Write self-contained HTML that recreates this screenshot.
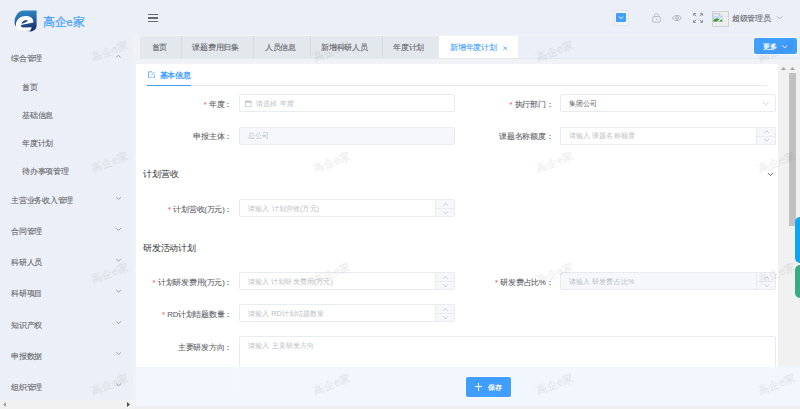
<!DOCTYPE html>
<html><head><meta charset="utf-8">
<style>
*{box-sizing:border-box;margin:0;padding:0}
html,body{width:800px;height:409px;overflow:hidden}
body{position:relative;background:#ebeff7;font-family:"Liberation Sans",sans-serif;color:#606266}
.a{position:absolute}
.t{position:absolute;white-space:nowrap;line-height:10px}
.star{color:#f56c6c;margin-right:2.5px}
.inp{position:absolute;height:17.5px;border:0.8px solid #e8ebf0;border-radius:2px;background:#fff}
.dis{background:#f5f7fa}
.ctl{position:absolute;right:0;top:0;width:18.6px;height:100%;border-left:0.8px solid #e8ebf0;background:#f5f7fa;border-radius:0 2px 2px 0}
.ctl:after{content:"";position:absolute;left:0;right:0;top:50%;border-top:0.8px solid #e8ebf0}
.wm{position:absolute;font-size:11.4px;color:rgba(0,0,0,0.06);-webkit-text-stroke:0.35px rgba(0,0,0,0.06);filter:blur(0.25px);transform:rotate(-21deg);white-space:nowrap;line-height:12px}
</style></head><body>

<div class="a" style="left:133px;top:35px;width:667px;height:374px;background:#f0f2f5"></div>
<div class="a" style="left:518.3px;top:36px;width:282px;height:21.8px;background:#ebeff7"></div>
<svg class="a" style="left:12px;top:8px" width="28" height="26" viewBox="0 0 28 26">
 <defs><linearGradient id="lg" x1="0" y1="0" x2="0.15" y2="1"><stop offset="0" stop-color="#2e8dc8"/><stop offset="0.5" stop-color="#2566a6"/><stop offset="1" stop-color="#1a2c6b"/></linearGradient></defs>
 <path d="M24.6 2.5 L24.6 17.8 C24.6 20.8 22.2 23.2 18.6 23.4 L11.5 22.2 C6 21.5 2.6 18.8 2.6 14.6 C2.6 7.6 6.6 2.5 11.2 2.5 Z" fill="url(#lg)"/>
 <path d="M21.3 14.6 C21.7 10.6 18.6 8.1 13.6 8.1 C7.8 8.1 3.9 12.2 3.9 17 C3.9 20.7 6.8 22.9 11.5 22.9 L18.2 22.7 L19.8 19.2 L11.6 19.4 C9.6 19.4 8.7 18.3 8.9 16.9 Z" fill="#fff"/>
 <path d="M9.3 15.7 C10.1 13.1 12.6 11.6 15.8 12 C15 14.1 12.6 15.5 9.3 15.7 Z" fill="#21508f"/>
</svg>
<div class="t" style="left:42.8px;top:15.2px;font-size:12.4px;line-height:14px;color:#409eff;letter-spacing:-0.1px;-webkit-text-stroke:0.2px #409eff">高企<span style="font-size:11px">e</span>家</div>
<div class="t" style="left:11px;top:53.55px;font-size:7.7px;letter-spacing:-0.25px;-webkit-text-stroke:0.08px currentColor;color:#606266;">综合管理</div>
<svg class="a" style="left:115px;top:54px" width="7" height="5" viewBox="0 0 7 5"><path d="M1.10 3.55 L3.40 1.25 L5.70 3.55" fill="none" stroke="#8c8f95" stroke-width="0.85"/></svg>
<div class="t" style="left:22.2px;top:83.40px;font-size:7.7px;letter-spacing:-0.25px;-webkit-text-stroke:0.08px currentColor;color:#606266;">首页</div>
<div class="t" style="left:22.2px;top:111.40px;font-size:7.7px;letter-spacing:-0.25px;-webkit-text-stroke:0.08px currentColor;color:#606266;">基础信息</div>
<div class="t" style="left:22.2px;top:139.00px;font-size:7.7px;letter-spacing:-0.25px;-webkit-text-stroke:0.08px currentColor;color:#606266;">年度计划</div>
<div class="t" style="left:22.2px;top:166.90px;font-size:7.7px;letter-spacing:-0.25px;-webkit-text-stroke:0.08px currentColor;color:#606266;">待办事项管理</div>
<div class="t" style="left:11px;top:196.20px;font-size:7.7px;letter-spacing:-0.25px;-webkit-text-stroke:0.08px currentColor;color:#606266;">主营业务收入管理</div>
<svg class="a" style="left:115px;top:196px" width="7" height="5" viewBox="0 0 7 5"><path d="M1.20 1.10 L3.50 3.40 L5.80 1.10" fill="none" stroke="#8c8f95" stroke-width="0.85"/></svg>
<div class="t" style="left:11px;top:227.25px;font-size:7.7px;letter-spacing:-0.25px;-webkit-text-stroke:0.08px currentColor;color:#606266;">合同管理</div>
<svg class="a" style="left:115px;top:227px" width="7" height="5" viewBox="0 0 7 5"><path d="M1.20 1.15 L3.50 3.45 L5.80 1.15" fill="none" stroke="#8c8f95" stroke-width="0.85"/></svg>
<div class="t" style="left:11px;top:258.00px;font-size:7.7px;letter-spacing:-0.25px;-webkit-text-stroke:0.08px currentColor;color:#606266;">科研人员</div>
<svg class="a" style="left:115px;top:257px" width="7" height="5" viewBox="0 0 7 5"><path d="M1.20 1.90 L3.50 4.20 L5.80 1.90" fill="none" stroke="#8c8f95" stroke-width="0.85"/></svg>
<div class="t" style="left:11px;top:289.00px;font-size:7.7px;letter-spacing:-0.25px;-webkit-text-stroke:0.08px currentColor;color:#606266;">科研项目</div>
<svg class="a" style="left:115px;top:288px" width="7" height="5" viewBox="0 0 7 5"><path d="M1.20 1.90 L3.50 4.20 L5.80 1.90" fill="none" stroke="#8c8f95" stroke-width="0.85"/></svg>
<div class="t" style="left:11px;top:320.50px;font-size:7.7px;letter-spacing:-0.25px;-webkit-text-stroke:0.08px currentColor;color:#606266;">知识产权</div>
<svg class="a" style="left:115px;top:320px" width="7" height="5" viewBox="0 0 7 5"><path d="M1.20 1.40 L3.50 3.70 L5.80 1.40" fill="none" stroke="#8c8f95" stroke-width="0.85"/></svg>
<div class="t" style="left:11px;top:351.50px;font-size:7.7px;letter-spacing:-0.25px;-webkit-text-stroke:0.08px currentColor;color:#606266;">申报数据</div>
<svg class="a" style="left:115px;top:351px" width="7" height="5" viewBox="0 0 7 5"><path d="M1.20 1.40 L3.50 3.70 L5.80 1.40" fill="none" stroke="#8c8f95" stroke-width="0.85"/></svg>
<div class="t" style="left:11px;top:382.70px;font-size:7.7px;letter-spacing:-0.25px;-webkit-text-stroke:0.08px currentColor;color:#606266;">组织管理</div>
<svg class="a" style="left:115px;top:382px" width="7" height="5" viewBox="0 0 7 5"><path d="M1.20 1.60 L3.50 3.90 L5.80 1.60" fill="none" stroke="#8c8f95" stroke-width="0.85"/></svg>
<div class="a" style="left:147.8px;top:14.1px;width:10.2px;height:1.2px;background:#66686d"></div>
<div class="a" style="left:147.8px;top:17.4px;width:10.2px;height:1.2px;background:#66686d"></div>
<div class="a" style="left:147.8px;top:20.5px;width:10.2px;height:1.2px;background:#66686d"></div>
<div class="a" style="left:613.7px;top:10px;width:15px;height:15.6px;border:0.8px solid #e3e6ec;border-radius:2px;background:#f2f4f8"></div>
<div class="a" style="left:616.2px;top:12.7px;width:9.8px;height:9.8px;background:#409eff;border-radius:1px"></div>
<svg class="a" style="left:617px;top:15px" width="7" height="5" viewBox="0 0 7 5"><path d="M1.90 1.50 L4.10 3.70 L6.30 1.50" fill="none" stroke="#fff" stroke-width="1.0"/></svg>
<svg class="a" style="left:652px;top:13px" width="9" height="10" viewBox="0 0 9 10"><path d="M2.5 3.6 V2.6 C2.5 1.4 3.4 0.6 4.5 0.6 C5.6 0.6 6.5 1.4 6.5 2.6 V3.6" fill="none" stroke="#b3b6bc" stroke-width="0.85"/><rect x="0.7" y="3.6" width="7.6" height="5.6" rx="0.8" fill="none" stroke="#b3b6bc" stroke-width="0.85"/><circle cx="4.5" cy="6.3" r="0.5" fill="#a0a3a9"/></svg>
<svg class="a" style="left:672px;top:15.2px" width="10" height="6" viewBox="0 0 10 6"><path d="M0.5 3 C1.8 1.2 3.2 0.5 5 0.5 C6.8 0.5 8.2 1.2 9.5 3 C8.2 4.8 6.8 5.5 5 5.5 C3.2 5.5 1.8 4.8 0.5 3 Z" fill="none" stroke="#a3a6ac" stroke-width="0.85"/><circle cx="5" cy="3" r="1.35" fill="none" stroke="#a3a6ac" stroke-width="0.8"/></svg>
<svg class="a" style="left:692.5px;top:13px" width="10" height="10" viewBox="0 0 10 10" fill="none" stroke="#7c7f85" stroke-width="0.85"><path d="M0.6 2.8 V0.6 H2.8 M0.7 0.7 L3.2 3.2"/><path d="M9.4 2.8 V0.6 H7.2 M9.3 0.7 L6.8 3.2"/><path d="M0.6 7.2 V9.4 H2.8 M0.7 9.3 L3.2 6.8"/><path d="M9.4 7.2 V9.4 H7.2 M9.3 9.3 L6.8 6.8"/></svg>
<div class="a" style="left:712.3px;top:11.2px;width:16.4px;height:16.2px;border:0.7px solid #d2d2d2;background:#eeeeef"></div>
<svg class="a" style="left:713.3px;top:12.5px" width="10" height="9" viewBox="0 0 10 9"><path d="M0.4 0.4 H6.6 L9.2 3 V8.5 H0.4 Z" fill="#c9dcf3" stroke="#a9b3c0" stroke-width="0.45"/><path d="M6.6 0.4 V3 H9.2" fill="#f4f4f4" stroke="#a9b3c0" stroke-width="0.45"/><path d="M1 2.5 C2.5 1.6 4 1.8 5 2.6" stroke="#eef4fb" stroke-width="1.1" fill="none"/><path d="M0.4 8.5 V7.2 C1.8 5.6 3.6 5.1 5.2 5.6 L6.4 6.4 L4.6 8.5 Z" fill="#3e9b2f"/><path d="M6.2 8.5 L8 6.6 L9.2 6.9 V8.5 Z" fill="#3e9b2f"/><path d="M4.2 9 L9.2 4.6" stroke="#ffffff" stroke-width="0.9"/></svg>
<div class="t" style="left:731.8px;top:13.60px;font-size:7.7px;letter-spacing:-0.25px;-webkit-text-stroke:0.08px currentColor;color:#606266;">超级管理员</div>
<svg class="a" style="left:776px;top:15px" width="8" height="5" viewBox="0 0 8 5"><path d="M1.10 1.40 L3.70 4.00 L6.30 1.40" fill="none" stroke="#909399" stroke-width="0.7"/></svg>
<div class="a" style="left:139.8px;top:57.5px;width:660px;height:1px;background:#e5e8ee"></div>
<div class="a" style="left:139.8px;top:35.5px;width:299.2px;height:22.3px;background:#e3e8ed;border-radius:1.5px 0 0 0"></div>
<div class="a" style="left:180.5px;top:35.5px;width:0.8px;height:22.3px;background:#d7dbe2"></div>
<div class="a" style="left:253.0px;top:35.5px;width:0.8px;height:22.3px;background:#d7dbe2"></div>
<div class="a" style="left:309.6px;top:35.5px;width:0.8px;height:22.3px;background:#d7dbe2"></div>
<div class="a" style="left:381.6px;top:35.5px;width:0.8px;height:22.3px;background:#d7dbe2"></div>
<div class="t" style="left:151.5px;top:43.00px;font-size:7.7px;letter-spacing:-0.25px;-webkit-text-stroke:0.08px currentColor;color:#606266;">首页</div>
<div class="t" style="left:192.3px;top:43.00px;font-size:7.7px;letter-spacing:-0.25px;-webkit-text-stroke:0.08px currentColor;color:#606266;">课题费用归集</div>
<div class="t" style="left:264.8px;top:43.00px;font-size:7.7px;letter-spacing:-0.25px;-webkit-text-stroke:0.08px currentColor;color:#606266;">人员信息</div>
<div class="t" style="left:321.0px;top:43.00px;font-size:7.7px;letter-spacing:-0.25px;-webkit-text-stroke:0.08px currentColor;color:#606266;">新增科研人员</div>
<div class="t" style="left:393.0px;top:43.00px;font-size:7.7px;letter-spacing:-0.25px;-webkit-text-stroke:0.08px currentColor;color:#606266;">年度计划</div>
<div class="a" style="left:439px;top:35.8px;width:79.3px;height:21.8px;background:#fff"></div>
<div class="t" style="left:450.0px;top:43.00px;font-size:7.7px;letter-spacing:-0.25px;-webkit-text-stroke:0.08px currentColor;color:#409eff;">新增年度计划</div>
<svg class="a" style="left:502.5px;top:46.3px" width="4.5" height="4.5" viewBox="0 0 4.5 4.5"><path d="M0.4 0.4 L4.1 4.1 M4.1 0.4 L0.4 4.1" stroke="#409eff" stroke-width="0.75"/></svg>
<div class="a" style="left:754.2px;top:38.2px;width:42.8px;height:16.1px;background:#409eff;border-radius:2px;box-shadow:0 0 0 0.9px rgba(255,255,255,0.75)"></div>
<div class="t" style="left:763.0px;top:41.90px;font-size:7.3px;letter-spacing:0.1px;color:#fff;font-weight:bold;-webkit-text-stroke:0;">更多</div>
<svg class="a" style="left:781px;top:44px" width="7" height="5" viewBox="0 0 7 5"><path d="M1.30 1.40 L3.70 3.80 L6.10 1.40" fill="none" stroke="#fff" stroke-width="0.95"/></svg>
<div class="a" style="left:136px;top:63.8px;width:642.3px;height:303.5px;background:#fff"></div>
<svg class="a" style="left:147.5px;top:70.8px" width="7.5" height="7.5" viewBox="0 0 7.5 7.5" fill="none" stroke="#409eff" stroke-width="0.8"><path d="M4 0.8 H0.6 V6.9 H6.7 V3.5"/><path d="M3.2 4.3 L6.8 0.7"/></svg>
<div class="t" style="left:159.7px;top:70.85px;font-size:7.7px;letter-spacing:-0.25px;-webkit-text-stroke:0.08px currentColor;color:#409eff;font-weight:bold;-webkit-text-stroke:0;">基本信息</div>
<div class="a" style="left:147px;top:85px;width:620px;height:0.9px;background:#e4e7ed"></div>
<div class="a" style="left:147px;top:84.6px;width:43.8px;height:1.5px;background:#409eff"></div>
<div class="t" style="right:567.80px;top:99.85px;font-size:7.7px;letter-spacing:-0.25px;-webkit-text-stroke:0.08px currentColor;color:#606266;text-align:right"><span class="star">*</span>年度：</div>
<div class="inp" style="left:238.60px;top:94.20px;width:216.30px;height:18.00px"></div>
<div class="t" style="left:256.3px;top:98.90px;font-size:7.3px;letter-spacing:0.1px;color:#babec6;">请选择 年度</div>
<svg class="a" style="left:245.40px;top:100.30px" width="7" height="7" viewBox="0 0 7 7"><rect x="0.55" y="1.2" width="5.6" height="5.2" fill="none" stroke="#c0c4cc" stroke-width="0.75"/><rect x="0.55" y="1.2" width="5.6" height="1.5" fill="#c0c4cc"/><path d="M2 0.2 V1.6 M4.7 0.2 V1.6" stroke="#c0c4cc" stroke-width="0.7"/></svg>
<div class="t" style="right:246.60px;top:99.85px;font-size:7.7px;letter-spacing:-0.25px;-webkit-text-stroke:0.08px currentColor;color:#606266;text-align:right"><span class="star">*</span>执行部门：</div>
<div class="inp" style="left:559.80px;top:94.20px;width:216.20px;height:18.00px"></div>
<div class="t" style="left:568.8px;top:98.90px;font-size:7.3px;letter-spacing:0.1px;color:#606266;">集团公司</div>
<svg class="a" style="left:762px;top:101px" width="8" height="5" viewBox="0 0 8 5"><path d="M1.10 1.00 L3.90 3.80 L6.70 1.00" fill="none" stroke="#b8bcc4" stroke-width="0.7"/></svg>
<div class="t" style="right:567.80px;top:132.35px;font-size:7.7px;letter-spacing:-0.25px;-webkit-text-stroke:0.08px currentColor;color:#606266;text-align:right">申报主体：</div>
<div class="inp dis" style="left:238.60px;top:126.50px;width:216.30px;height:18.00px"></div>
<div class="t" style="left:247.60000000000002px;top:131.20px;font-size:7.3px;letter-spacing:0.1px;color:#babec6;">总公司</div>
<div class="t" style="right:246.60px;top:132.35px;font-size:7.7px;letter-spacing:-0.25px;-webkit-text-stroke:0.08px currentColor;color:#606266;text-align:right">课题名称额度：</div>
<div class="inp" style="left:559.80px;top:126.50px;width:216.20px;height:18.00px"><div class="ctl"></div></div>
<div class="t" style="left:568.8px;top:131.20px;font-size:7.3px;letter-spacing:0.1px;color:#babec6;">请输入 课题名称额度</div>
<svg class="a" style="left:763px;top:129px" width="7" height="5" viewBox="0 0 7 5"><path d="M1.40 4.15 L3.70 1.85 L6.00 4.15" fill="none" stroke="#b4b7be" stroke-width="0.65"/></svg>
<svg class="a" style="left:763px;top:137px" width="7" height="5" viewBox="0 0 7 5"><path d="M1.40 1.85 L3.70 4.15 L6.00 1.85" fill="none" stroke="#b4b7be" stroke-width="0.65"/></svg>
<div class="t" style="left:143px;top:169.25px;font-size:8.7px;letter-spacing:-0.1px;color:#303133;">计划营收</div>
<svg class="a" style="left:766px;top:172px" width="8" height="5" viewBox="0 0 8 5"><path d="M1.80 1.00 L4.40 3.60 L7.00 1.00" fill="none" stroke="#303133" stroke-width="0.75"/></svg>
<div class="t" style="right:567.80px;top:205.15px;font-size:7.7px;letter-spacing:-0.25px;-webkit-text-stroke:0.08px currentColor;color:#606266;text-align:right"><span class="star">*</span>计划营收(万元)：</div>
<div class="inp" style="left:239.10px;top:199.10px;width:215.80px;height:18.00px"><div class="ctl"></div></div>
<div class="t" style="left:248.10000000000002px;top:203.80px;font-size:7.3px;letter-spacing:0.1px;color:#babec6;">请输入 计划营收(万元)</div>
<svg class="a" style="left:442px;top:202px" width="7" height="5" viewBox="0 0 7 5"><path d="M1.30 3.75 L3.60 1.45 L5.90 3.75" fill="none" stroke="#b4b7be" stroke-width="0.65"/></svg>
<svg class="a" style="left:442px;top:210px" width="7" height="5" viewBox="0 0 7 5"><path d="M1.30 1.45 L3.60 3.75 L5.90 1.45" fill="none" stroke="#b4b7be" stroke-width="0.65"/></svg>
<div class="t" style="left:142.8px;top:242.50px;font-size:8.7px;letter-spacing:-0.1px;color:#303133;">研发活动计划</div>
<div class="t" style="right:567.80px;top:277.65px;font-size:7.7px;letter-spacing:-0.25px;-webkit-text-stroke:0.08px currentColor;color:#606266;text-align:right"><span class="star">*</span>计划研发费用(万元)：</div>
<div class="inp" style="left:238.80px;top:272.20px;width:216.10px;height:18.00px"><div class="ctl"></div></div>
<div class="t" style="left:247.8px;top:276.90px;font-size:7.3px;letter-spacing:0.1px;color:#babec6;">请输入 计划研发费用(万元)</div>
<svg class="a" style="left:442px;top:275px" width="7" height="5" viewBox="0 0 7 5"><path d="M1.30 3.85 L3.60 1.55 L5.90 3.85" fill="none" stroke="#b4b7be" stroke-width="0.65"/></svg>
<svg class="a" style="left:442px;top:283px" width="7" height="5" viewBox="0 0 7 5"><path d="M1.30 1.55 L3.60 3.85 L5.90 1.55" fill="none" stroke="#b4b7be" stroke-width="0.65"/></svg>
<div class="t" style="right:246.60px;top:277.65px;font-size:7.7px;letter-spacing:-0.25px;-webkit-text-stroke:0.08px currentColor;color:#606266;text-align:right"><span class="star">*</span>研发费占比%：</div>
<div class="inp dis" style="left:559.80px;top:272.20px;width:216.20px;height:18.00px"><div class="ctl"></div></div>
<div class="t" style="left:568.8px;top:276.90px;font-size:7.3px;letter-spacing:0.1px;color:#babec6;">请输入 研发费占比%</div>
<svg class="a" style="left:763px;top:275px" width="7" height="5" viewBox="0 0 7 5"><path d="M1.40 3.85 L3.70 1.55 L6.00 3.85" fill="none" stroke="#b4b7be" stroke-width="0.65"/></svg>
<svg class="a" style="left:763px;top:283px" width="7" height="5" viewBox="0 0 7 5"><path d="M1.40 1.55 L3.70 3.85 L6.00 1.55" fill="none" stroke="#b4b7be" stroke-width="0.65"/></svg>
<div class="t" style="right:567.80px;top:309.65px;font-size:7.7px;letter-spacing:-0.25px;-webkit-text-stroke:0.08px currentColor;color:#606266;text-align:right"><span class="star">*</span>RD计划结题数量：</div>
<div class="inp" style="left:238.80px;top:304.20px;width:216.10px;height:18.00px"><div class="ctl"></div></div>
<div class="t" style="left:247.8px;top:308.90px;font-size:7.3px;letter-spacing:0.1px;color:#babec6;">请输入 RD计划结题数量</div>
<svg class="a" style="left:442px;top:307px" width="7" height="5" viewBox="0 0 7 5"><path d="M1.30 3.85 L3.60 1.55 L5.90 3.85" fill="none" stroke="#b4b7be" stroke-width="0.65"/></svg>
<svg class="a" style="left:442px;top:315px" width="7" height="5" viewBox="0 0 7 5"><path d="M1.30 1.55 L3.60 3.85 L5.90 1.55" fill="none" stroke="#b4b7be" stroke-width="0.65"/></svg>
<div class="t" style="right:567.80px;top:342.65px;font-size:7.7px;letter-spacing:-0.25px;-webkit-text-stroke:0.08px currentColor;color:#606266;text-align:right">主要研发方向：</div>
<div class="inp" style="left:239.30px;top:335.90px;width:536.80px;height:59.50px"></div>
<div class="t" style="left:248.3px;top:341.20px;font-size:7.3px;letter-spacing:0.1px;color:#babec6;">请输入 主要研发方向</div>
<div class="a" style="left:778.3px;top:63.8px;width:10.7px;height:345px;background:#f1f1f1"></div>
<div class="a" style="left:789px;top:63.8px;width:11px;height:345px;background:#f1f1f1"></div>
<svg class="a" style="left:780.5px;top:67.3px" width="5" height="3" viewBox="0 0 5 3"><path d="M0 3 L2.5 0 L5 3 Z" fill="#a3a3a3"/></svg>
<svg class="a" style="left:790.1px;top:67.3px" width="5" height="3" viewBox="0 0 5 3"><path d="M0 3 L2.5 0 L5 3 Z" fill="#a3a3a3"/></svg>
<div class="a" style="left:789px;top:73.2px;width:6.9px;height:152.7px;background:#c1c1c1"></div>
<div class="a" style="left:794.8px;top:217.3px;width:10px;height:45.6px;background:#0ea6ee;border-radius:5px 0 0 5px"></div>
<div class="a" style="left:795.2px;top:264.7px;width:10px;height:33px;background:#38ad84;border-radius:5px 0 0 5px"></div>
<div class="a" style="left:136px;top:367px;width:664px;height:38.5px;background:rgba(241,245,253,0.94)"></div>
<div class="a" style="left:133px;top:405.5px;width:667px;height:3.5px;background:#efefef"></div>
<div class="a" style="left:0;top:399.6px;width:133px;height:9.4px;background:#f1f1f1"></div>
<svg class="a" style="left:3px;top:402.3px" width="3" height="5" viewBox="0 0 3 5"><path d="M3 0 L0 2.5 L3 5 Z" fill="#a3a3a3"/></svg>
<svg class="a" style="left:127px;top:402.3px" width="3" height="5" viewBox="0 0 3 5"><path d="M0 0 L3 2.5 L0 5 Z" fill="#505050"/></svg>
<div class="a" style="left:465.7px;top:376.8px;width:45.3px;height:19.9px;background:#409eff;border-radius:2px;box-shadow:0 0 0 0.9px rgba(255,255,255,0.75)"></div>
<div class="a" style="left:475px;top:386.2px;width:7.1px;height:1.1px;background:#fff"></div>
<div class="a" style="left:478px;top:383px;width:1.1px;height:7.6px;background:#fff"></div>
<div class="t" style="left:488.2px;top:383.20px;font-size:7.3px;letter-spacing:0.1px;color:#fff;font-weight:bold;-webkit-text-stroke:0;">保存</div>
<div class="wm" style="left:89.5px;top:44.7px">高企e家</div>
<div class="wm" style="left:311.5px;top:44.7px">高企e家</div>
<div class="wm" style="left:534.5px;top:44.7px">高企e家</div>
<div class="wm" style="left:756.5px;top:44.7px">高企e家</div>
<div class="wm" style="left:89.5px;top:155.7px">高企e家</div>
<div class="wm" style="left:311.5px;top:155.7px">高企e家</div>
<div class="wm" style="left:534.5px;top:155.7px">高企e家</div>
<div class="wm" style="left:756.5px;top:155.7px">高企e家</div>
<div class="wm" style="left:89.5px;top:266.7px">高企e家</div>
<div class="wm" style="left:311.5px;top:266.7px">高企e家</div>
<div class="wm" style="left:534.5px;top:266.7px">高企e家</div>
<div class="wm" style="left:756.5px;top:266.7px">高企e家</div>
<div class="wm" style="left:89.5px;top:377.7px">高企e家</div>
<div class="wm" style="left:311.5px;top:377.7px">高企e家</div>
<div class="wm" style="left:534.5px;top:377.7px">高企e家</div>
<div class="wm" style="left:756.5px;top:377.7px">高企e家</div>
</body></html>
